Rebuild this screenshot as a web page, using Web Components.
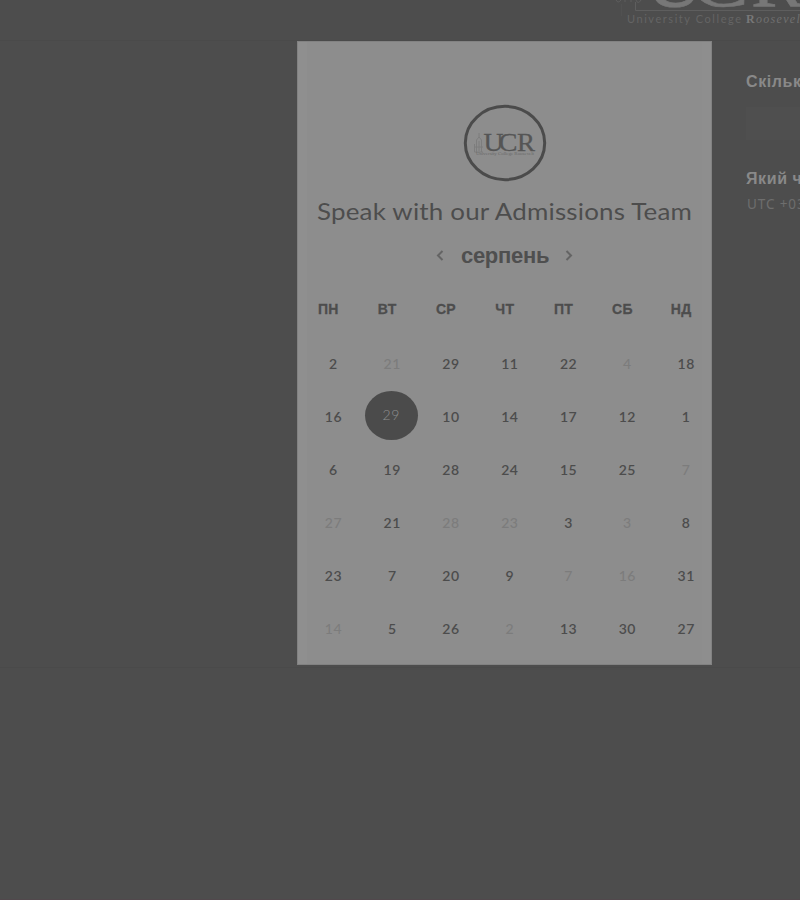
<!DOCTYPE html>
<html lang="uk">
<head>
<meta charset="utf-8">
<title>Speak with our Admissions Team</title>
<style>
html,body{margin:0;height:100%;background:#4d4d4d}
</style>
</head>
<body>
<booking-page></booking-page>
<script>
const make = (name, html, init) => customElements.define(name, class extends HTMLElement {
  constructor(){ super(); this.attachShadow({mode:'open'}).innerHTML = html; }
  connectedCallback(){ if (init) init(this, this.shadowRoot); }
});

make('brand-header', `
<style>
:host{display:block;position:absolute;left:612px;top:0;width:188px;height:30px;overflow:hidden}
svg{display:block}
</style>
<svg width="188" height="30" viewBox="0 0 188 30">
  <g fill="none" stroke="#5e5e5e" stroke-width="1"><path d="M4 0q2 4 5 0M13 0v2M19 0v2M24 0q2 5 5 0"/><path d="M23.500 2v8.500H188" stroke="#5e5e5e"/><path d="M9.500 4v12" stroke="#515151"/></g>
  <g font-family="Liberation Serif, serif" font-size="78" fill="#777" stroke="#777" stroke-width=".6">
    <text x="32" y="5.500" textLength="61" lengthAdjust="spacingAndGlyphs">U</text><text x="78" y="5.500" textLength="59" lengthAdjust="spacingAndGlyphs">C</text><text x="139" y="6">R</text>
  </g>
  <text x="15" y="23" font-family="Lato, sans-serif" font-size="11" fill="#646464" textLength="114">University College</text>
  <text x="134" y="23" font-family="Liberation Serif, serif" font-size="12" font-weight="bold" fill="#787878" letter-spacing="1.300">R<tspan font-style="italic" font-weight="400" fill="#707070">oosevelt</tspan></text>
</svg>`);

make('brand-badge', `
<style>:host{display:block;width:84px;height:78px}svg{display:block}</style>
<svg width="84" height="78" viewBox="0 0 84 78">
  <ellipse cx="42" cy="39" rx="39.700" ry="36.700" fill="none" stroke="#4b4b4b" stroke-width="3"/>
  <g fill="none" stroke="#7d7d7d" stroke-width="1"><path d="M16 29v5M13.500 36l2.500-3 2.500 3v12M13.500 36v12M11.500 40v8h8.500M16 37v10M12 43h8"/></g>
  <g font-family="Liberation Serif, serif" font-size="25.500" fill="#555" stroke="#555" stroke-width=".3"><text x="20.500" y="46.500" textLength="20" lengthAdjust="spacingAndGlyphs">U</text><text x="35.500" y="46.500" textLength="19" lengthAdjust="spacingAndGlyphs">C</text><text x="54" y="46.500" textLength="18" lengthAdjust="spacingAndGlyphs">R</text></g>
  <text x="13" y="51" font-family="Liberation Serif, serif" font-size="5" fill="#6a6a6a" textLength="58">University College Roosevelt</text>
</svg>`);

make('month-switcher', `
<style>
:host{display:flex;align-items:center;justify-content:center;height:30px;font:bold 22px/30px "Liberation Sans",sans-serif;color:#4f4f4f}
span{display:block;width:90px;margin:0 20px 0 17px;letter-spacing:-.3px;white-space:nowrap}
svg{display:block;width:8px;height:11px;fill:none;stroke:#646464;stroke-width:2;margin-top:-2px}
</style>
<svg viewBox="0 0 8 11"><path d="M6.500 1L2 5.500l4.500 4.500"/></svg><span><slot></slot></span><svg viewBox="0 0 8 11" style="margin-left:-6px"><path d="M1.500 1L6 5.500 1.500 10"/></svg>`);

make('day-cell', `
<style>
:host{display:flex;align-items:center;justify-content:center;height:53px;font:600 14px/20px Lato,sans-serif;letter-spacing:.5px;color:#4c4c4c}
:host([off]){color:#7c7c7c;font-weight:500}
:host([on]){color:#8f8f8f;font-weight:300}
b{font-weight:inherit;display:grid;place-items:center}
:host([on]) b{width:53px;height:49px;border-radius:50%;background:#4b4b4b;margin:-3px 0 0 -2px}
</style><b><slot></slot></b>`);

make('month-grid', `
<style>
:host{display:block}
.w,.d{display:grid;grid-template-columns:repeat(7,58.8px)}
.w{font:bold 14px/20px "Liberation Sans",sans-serif;letter-spacing:.3px;-webkit-text-stroke:.3px #4d4d4d;color:#4d4d4d;text-align:center;margin-left:1px}
.d{margin:18px 0 0 6px}
</style><div class="w"></div><div class="d"></div>`, (h, r) => {
  r.querySelector('.w').innerHTML = 'ПН ВТ СР ЧТ ПТ СБ НД'.split(' ').map(t => `<span>${t}</span>`).join('');
  r.querySelector('.d').innerHTML = ('2 21- 29 11 22 4- 18 16 29* 10 14 17 12 1 6 19 28 24 15 25 7- 27- 21 28- 23- 3 3- 8 ' +
    '23 7 20 9 7- 16- 31 14- 5 26 2- 13 30 27').split(' ')
    .map(t => `<day-cell${t.endsWith('-') ? ' off' : t.endsWith('*') ? ' on' : ''}>${parseInt(t)}</day-cell>`).join('');
});

make('calendar-card', `
<style>
:host{display:block;box-sizing:border-box;width:415px;height:624px;padding-top:62px;background:#8d8d8d;border:1px solid #828282;box-shadow:inset 9px 0 #8f8f8f, inset -9px 0 #8e8e8e;overflow:hidden}
brand-badge{margin-left:165px}
h1{margin:13px 0 0 19px;font:400 24px/32px Lato,sans-serif;letter-spacing:.17px;color:#4d4d4d;white-space:nowrap;width:max-content;transform:scaleX(1.081);transform-origin:0 0}
month-switcher{margin-top:14px}
month-grid{margin-top:28px}
</style>
<brand-badge></brand-badge><h1><slot></slot></h1><month-switcher>серпень</month-switcher><month-grid></month-grid>`);

make('meeting-options', `
<style>
:host{display:block;width:54px;overflow:hidden;white-space:nowrap;font:bold 16px/20px "Liberation Sans",sans-serif;letter-spacing:.6px;color:#898989}
.f{height:33px;background:#4f4f4f;margin:15px 0 29px}
.z{font:400 13.500px/20px "Noto Sans",sans-serif;letter-spacing:.9px;color:#6e6e6e;margin:5px 0 0 1px}
</style>
<div>Скільки</div><div class="f"></div><div>Який час</div><div class="z">UTC +03:00</div>`);

make('booking-page', `
<style>
:host{display:block;box-sizing:border-box;position:relative;width:800px;height:900px;padding-top:41px;background:#4d4d4d;border-bottom:1px solid #51484c;overflow:hidden}
main{display:flex;height:628px;padding-left:297px;box-sizing:border-box;border-top:1px solid #4a4a4a;border-bottom:1px solid #4a4a4a;margin-top:-1px}
meeting-options{margin:31px 0 0 34px}
</style>
<brand-header></brand-header>
<main><calendar-card>Speak with our Admissions Team</calendar-card><meeting-options></meeting-options></main>`);
</script>
</body>
</html>
